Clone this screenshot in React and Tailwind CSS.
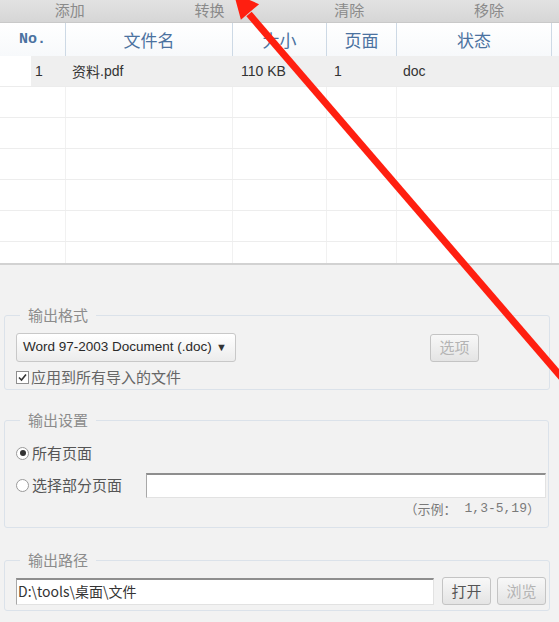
import React from "react";

const cjk = "font-['Noto_Sans_CJK_SC','Noto_Sans',sans-serif]";

const columns = [
  { label: "No.", width: "w-[66px]", mono: true },
  { label: "文件名", width: "w-[167px]" },
  { label: "大小", width: "w-[94px]" },
  { label: "页面", width: "w-[70px]" },
  { label: "状态", width: "w-[155px]" },
];

const Radio = ({ checked }) => (
  <span className="w-[13px] h-[13px] rounded-full border border-[#9a9a9a] bg-white flex items-center justify-center shrink-0">
    {checked && <span className="w-[6px] h-[6px] rounded-full bg-[#333]" />}
  </span>
);

const Legend = ({ children }) => (
  <legend className={`ml-[4px] px-[8px] h-[20px] leading-[20px] text-[15px] text-[#8c8c8c] ${cjk}`}>
    {children}
  </legend>
);

const SmallButton = ({ children, disabled }) => (
  <button
    className={`h-[28px] w-[49px] rounded-[3px] border border-[#c4c4c4] bg-gradient-to-b from-[#f8f8f8] to-[#e4e4e4] text-[15px] ${cjk} ${
      disabled ? "text-[#b4b4b4]" : "text-[#555]"
    }`}
  >
    {children}
  </button>
);

export default function App() {
  const emptyRows = [0, 1, 2, 3, 4];

  return (
    <div className="relative w-[559px] h-[622px] overflow-hidden bg-[#f2f2f2] font-['Liberation_Sans',Arial,sans-serif] flex flex-col">
      {/* Toolbar */}
      <div className={`h-[23px] grid grid-cols-4 bg-gradient-to-b from-[#e2e2e2] to-[#d6d6d6] border-b border-[#c9c9c9] text-[15px] text-[#8a8a8a] ${cjk}`}>
        {["添加", "转换", "清除", "移除"].map((t) => (
          <div key={t} className="flex items-center justify-center leading-none -mt-[3px]">
            {t}
          </div>
        ))}
      </div>

      {/* File table */}
      <div className="bg-white h-[240px] flex flex-col">
        <div className="h-[33px] flex bg-gradient-to-b from-white to-[#f7f9fb]">
          {columns.map((c) => (
            <div
              key={c.label}
              className={`${c.width} flex items-center justify-center border-r border-[#cdd9e5] text-[#4b72a0] ${
                c.mono ? "font-['Liberation_Mono',monospace] font-bold text-[15px] pt-[2px]" : `${cjk} text-[17px]`
              }`}
            >
              {c.label}
            </div>
          ))}
        </div>

        <div className="h-[31px] flex text-[14px] text-[#333] border-b border-[#ececec]">
          <div className="w-[66px] flex">
            <div className="w-[31px] bg-white" />
            <div className="flex-1 bg-[#efefef] flex items-center pl-[4px]">1</div>
          </div>
          <div className="w-[167px] bg-[#efefef] flex items-center pl-[6px]">
            <span className={cjk}>资料</span>.pdf
          </div>
          <div className="w-[94px] bg-[#efefef] flex items-center pl-[8px]">110 KB</div>
          <div className="w-[70px] bg-[#efefef] flex items-center pl-[7px]">1</div>
          <div className="flex-1 bg-[#efefef] flex items-center pl-[6px]">doc</div>
        </div>

        {emptyRows.map((r) => (
          <div key={r} className="h-[31px] flex border-b border-[#ededed] shrink-0">
            {columns.map((c) => (
              <div key={c.label} className={`${c.width} border-r border-[#f1f1f1]`} />
            ))}
          </div>
        ))}
        <div className="flex-1 flex">
          {columns.map((c) => (
            <div key={c.label} className={`${c.width} border-r border-[#f1f1f1]`} />
          ))}
        </div>
      </div>
      <div className="h-[2px] bg-[#d2d2d2]" />

      {/* Output format */}
      <fieldset className="mt-[40px] ml-[4px] w-[546px] border border-[#dbe2ea] rounded-[3px] px-[11px] pb-[1px]">
        <Legend>输出格式</Legend>
        <div className="mt-[8px] flex items-center">
          <div className="w-[220px] h-[29px] rounded-[3px] border border-[#c8c8c8] bg-gradient-to-b from-white to-[#ececec] flex items-center justify-between pl-[6px] pr-[8px] text-[13.5px] text-[#2a2a2a]">
            <span>Word 97-2003 Document (.doc)</span>
            <span className="text-[11px] text-[#333]">▼</span>
          </div>
          <div className="ml-auto mr-[59px]">
            <SmallButton disabled>选项</SmallButton>
          </div>
        </div>
        <div className={`h-[21px] mt-[5px] flex items-center gap-[2px] text-[15px] text-[#666] ${cjk}`}>
          <span className="w-[13px] h-[13px] border border-[#8f8f8f] bg-white flex items-center justify-center shrink-0">
            <svg width="11" height="11" viewBox="0 0 11 11">
              <path d="M2 5.5 L4.5 8 L9 2.5" fill="none" stroke="#333" strokeWidth="1.6" />
            </svg>
          </span>
          应用到所有导入的文件
        </div>
      </fieldset>

      {/* Output settings */}
      <fieldset className="mt-[20px] ml-[4px] w-[545px] border border-[#dbe2ea] rounded-[3px] pl-[11px] pr-[2px] pb-[9px]">
        <Legend>输出设置</Legend>
        <div className={`mt-[13px] h-[20px] flex items-center gap-[3px] text-[15px] text-[#555] ${cjk}`}>
          <Radio checked />
          所有页面
        </div>
        <div className={`mt-[10px] h-[25px] flex items-center text-[15px] text-[#555] ${cjk}`}>
          <div className="w-[130px] flex items-center gap-[3px]">
            <Radio />
            选择部分页面
          </div>
          <div className="flex-1 h-[25px] bg-white border border-[#e2e2e2] border-t-2 border-t-[#8e8e8e] border-l-[#a8a8a8]" />
        </div>
        <div className="mt-[2px] h-[18px] flex items-center justify-end pr-[6px] text-[13px] text-[#7a7a7a]">
          <span className={cjk}>（示例：</span>
          <span className="ml-[8px] font-['Liberation_Mono',monospace]">1,3-5,19</span>
          <span className={cjk}>）</span>
        </div>
      </fieldset>

      {/* Output path */}
      <fieldset className="mt-[22px] ml-[4px] w-[545px] border border-[#dbe2ea] rounded-[3px] pl-[11px] pr-[3px] pb-[5px]">
        <Legend>输出路径</Legend>
        <div className="mt-[7px] flex items-center">
          <div className={`w-[418px] h-[27px] bg-white border border-[#e2e2e2] border-t-2 border-t-[#8e8e8e] border-l-[#a8a8a8] flex items-center pl-[1px] text-[14px] text-[#333] ${cjk}`}>
            D:\tools\桌面\文件
          </div>
          <div className="ml-[8px]">
            <SmallButton>打开</SmallButton>
          </div>
          <div className="ml-[6px]">
            <SmallButton disabled>浏览</SmallButton>
          </div>
        </div>
      </fieldset>

      {/* Red annotation arrow */}
      <svg className="absolute inset-0 pointer-events-none" width="559" height="622" viewBox="0 0 559 622">
        <line x1="249" y1="14" x2="575" y2="393" stroke="#ff1f10" strokeWidth="7" />
        <polygon points="233.7,-7 240.9,19.8 259.1,4.2" fill="#ff1f10" />
      </svg>
    </div>
  );
}
